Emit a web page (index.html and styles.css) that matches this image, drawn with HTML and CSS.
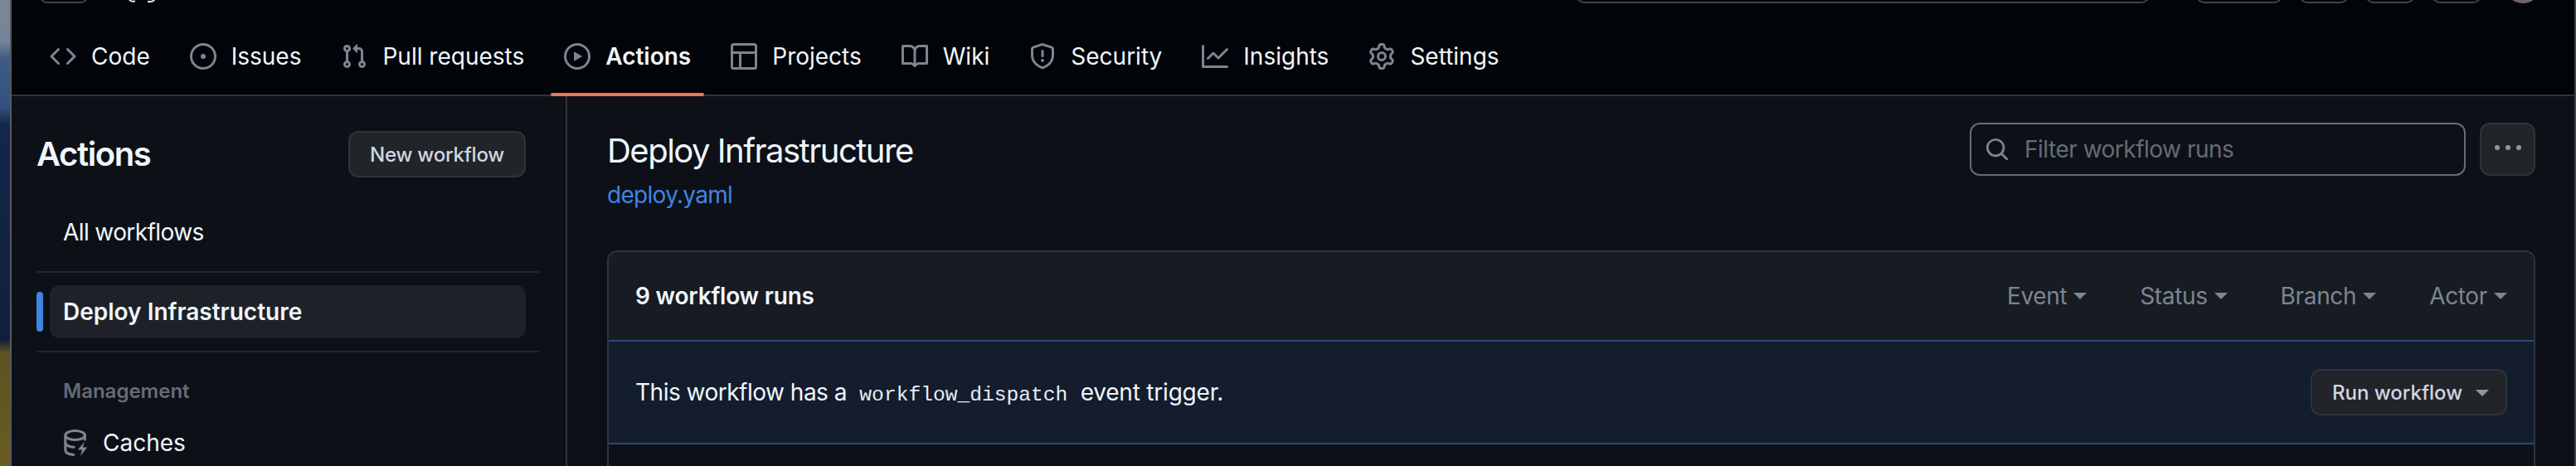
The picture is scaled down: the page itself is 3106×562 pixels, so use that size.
FILE: index.html
```html
<!DOCTYPE html>
<html lang="en">
<head>
<meta charset="utf-8">
<title>Deploy Infrastructure · Actions</title>
<link rel="stylesheet" href="styles.css">
</head>
<body>
<div class="window">
  <header class="header">
    <div class="top-row">
      <span class="clip-btn clip-logo"></span>
      <svg class="clip-glyphs" width="40" height="3" viewBox="0 0 40 3"><path d="M2 0c1 1.400 3 2 7 1.500M24 1.800c4 .5 7-.2 8-1.800" fill="none" stroke="#e6edf3" stroke-width="2"/></svg>
      <span class="top-spacer"></span>
      <span class="clip-btn clip-search"></span>
      <span class="clip-btn clip-wide"></span>
      <span class="clip-btn clip-small"></span>
      <span class="clip-btn clip-small"></span>
      <span class="clip-btn clip-small"></span>
      <span class="clip-avatar"></span>
    </div>
    <nav class="tabs">
      <a class="tab"><svg class="icon" viewBox="0 0 16 16"><path d="m11.28 3.22 4.25 4.25a.75.75 0 0 1 0 1.06l-4.25 4.25a.749.749 0 0 1-1.275-.326.749.749 0 0 1 .215-.734L13.94 8l-3.72-3.72a.749.749 0 0 1 .326-1.275.749.749 0 0 1 .734.215Zm-6.56 0a.751.751 0 0 1 1.042.018.751.751 0 0 1 .018 1.042L2.06 8l3.72 3.72a.749.749 0 0 1-.326 1.275.749.749 0 0 1-.734-.215L.47 8.53a.75.75 0 0 1 0-1.06Z"/></svg>Code</a>
      <a class="tab"><svg class="icon" viewBox="0 0 16 16"><path d="M8 9.500a1.500 1.500 0 1 0 0-3 1.500 1.500 0 0 0 0 3Z"/><path d="M8 0a8 8 0 1 1 0 16A8 8 0 0 1 8 0ZM1.500 8a6.500 6.500 0 1 0 13 0 6.500 6.500 0 0 0-13 0Z"/></svg>Issues</a>
      <a class="tab"><svg class="icon" viewBox="0 0 16 16"><path d="M1.500 3.250a2.250 2.250 0 1 1 3 2.122v5.256a2.251 2.251 0 1 1-1.500 0V5.372A2.250 2.250 0 0 1 1.500 3.250Zm5.677-.177L9.573.677A.25.25 0 0 1 10 .854V2.500h1A2.500 2.500 0 0 1 13.500 5v5.628a2.251 2.251 0 1 1-1.500 0V5a1 1 0 0 0-1-1h-1v1.646a.25.25 0 0 1-.427.177L7.177 3.427a.25.25 0 0 1 0-.354ZM3.750 2.500a.75.75 0 1 0 0 1.500.75.75 0 0 0 0-1.500Zm0 9.500a.75.75 0 1 0 0 1.500.75.75 0 0 0 0-1.500Zm8.250.75a.75.75 0 1 0 1.500 0 .75.75 0 0 0-1.500 0Z"/></svg>Pull requests</a>
      <a class="tab tab-active"><svg class="icon" viewBox="0 0 16 16"><path d="M8 0a8 8 0 1 1 0 16A8 8 0 0 1 8 0ZM1.500 8a6.500 6.500 0 1 0 13 0 6.500 6.500 0 0 0-13 0Zm4.879-2.773 4.264 2.559a.25.25 0 0 1 0 .428l-4.264 2.559A.25.25 0 0 1 6 10.559V5.442a.25.25 0 0 1 .379-.215Z"/></svg>Actions</a>
      <a class="tab"><svg class="icon" viewBox="0 0 16 16"><path d="M0 1.750C0 .784.784 0 1.750 0h12.500C15.216 0 16 .784 16 1.750v12.500A1.750 1.750 0 0 1 14.250 16H1.750A1.750 1.750 0 0 1 0 14.250ZM6.500 6.500v8h7.750a.25.25 0 0 0 .25-.25V6.500Zm8-1.500V1.750a.25.25 0 0 0-.25-.25H1.750a.25.25 0 0 0-.25.25V5Zm-13 1.500v7.750c0 .138.112.25.25.25H5v-8Z"/></svg>Projects</a>
      <a class="tab"><svg class="icon" viewBox="0 0 16 16"><path d="M0 1.750A.75.75 0 0 1 .75 1h4.253c1.227 0 2.317.59 3 1.501A3.743 3.743 0 0 1 11.006 1h4.245a.75.75 0 0 1 .75.75v10.500a.75.75 0 0 1-.75.75h-4.507a2.250 2.250 0 0 0-1.591.659l-.622.621a.75.75 0 0 1-1.060 0l-.622-.621A2.250 2.250 0 0 0 5.258 13H.75a.75.75 0 0 1-.75-.75Zm7.251 10.324.004-5.073-.002-2.253A2.250 2.250 0 0 0 5.003 2.500H1.500v9h3.757a3.750 3.750 0 0 1 1.994.574ZM8.755 4.750l-.004 7.322a3.752 3.752 0 0 1 1.992-.572H14.500v-9h-3.495a2.250 2.250 0 0 0-2.250 2.250Z"/></svg>Wiki</a>
      <a class="tab"><svg class="icon" viewBox="0 0 16 16"><path d="M7.467.133a1.748 1.748 0 0 1 1.066 0l5.250 1.680A1.750 1.750 0 0 1 15 3.480V7c0 1.566-.32 3.182-1.303 4.682-.983 1.498-2.585 2.813-5.032 3.855a1.697 1.697 0 0 1-1.330 0c-2.447-1.042-4.049-2.357-5.032-3.855C1.320 10.182 1 8.566 1 7V3.480a1.750 1.750 0 0 1 1.217-1.667Zm.61 1.429a.25.25 0 0 0-.153 0l-5.250 1.680a.25.25 0 0 0-.174.238V7c0 1.358.275 2.666 1.057 3.860.784 1.194 2.121 2.340 4.366 3.297a.196.196 0 0 0 .154 0c2.245-.956 3.582-2.104 4.366-3.298C13.225 9.666 13.500 8.360 13.500 7V3.480a.251.251 0 0 0-.174-.237l-5.250-1.680ZM8.750 4.750v3a.75.75 0 0 1-1.500 0v-3a.75.75 0 0 1 1.500 0ZM9 10.500a1 1 0 1 1-2 0 1 1 0 0 1 2 0Z"/></svg>Security</a>
      <a class="tab"><svg class="icon" viewBox="0 0 16 16"><path d="M1.500 1.750V13.500h13.750a.75.75 0 0 1 0 1.500H.75a.75.75 0 0 1-.75-.75V1.750a.75.75 0 0 1 1.500 0Zm14.280 2.530-5.250 5.250a.75.75 0 0 1-1.060 0L7 7.060 4.280 9.780a.751.751 0 0 1-1.042-.018.751.751 0 0 1-.018-1.042l3.250-3.250a.75.75 0 0 1 1.060 0L10 7.940l4.720-4.720a.751.751 0 0 1 1.042.018.751.751 0 0 1 .018 1.042Z"/></svg>Insights</a>
      <a class="tab"><svg class="icon" viewBox="0 0 16 16"><path d="M8 0a8.200 8.200 0 0 1 .701.031C9.444.095 9.990.645 10.160 1.290l.288 1.107c.018.066.079.158.212.224.231.114.454.243.668.386.123.082.233.09.299.071l1.103-.303c.644-.176 1.392.021 1.820.63.27.385.506.792.704 1.218.315.675.111 1.422-.364 1.891l-.814.806c-.049.048-.098.147-.088.294.016.257.016.515 0 .772-.01.147.038.246.088.294l.814.806c.475.469.679 1.216.364 1.891a7.977 7.977 0 0 1-.704 1.217c-.428.61-1.176.807-1.820.63l-1.102-.302c-.067-.019-.177-.011-.3.071a5.909 5.909 0 0 1-.668.386c-.133.066-.194.158-.211.224l-.29 1.106c-.168.646-.715 1.196-1.458 1.260a8.006 8.006 0 0 1-1.402 0c-.743-.064-1.289-.614-1.458-1.260l-.289-1.106c-.018-.066-.079-.158-.212-.224a5.738 5.738 0 0 1-.668-.386c-.123-.082-.233-.09-.299-.071l-1.103.303c-.644.176-1.392-.021-1.820-.63a8.120 8.120 0 0 1-.704-1.218c-.315-.675-.111-1.422.363-1.891l.815-.806c.05-.048.098-.147.088-.294a6.214 6.214 0 0 1 0-.772c.01-.147-.038-.246-.088-.294l-.815-.806C.635 6.045.431 5.298.746 4.623a7.920 7.920 0 0 1 .704-1.217c.428-.61 1.176-.807 1.820-.63l1.102.302c.067.019.177.011.3-.071.214-.143.437-.272.668-.386.133-.066.194-.158.211-.224l.29-1.106C6.009.645 6.556.095 7.299.03 7.530.01 7.764 0 8 0Zm-.571 1.525c-.036.003-.108.036-.137.146l-.289 1.105c-.147.561-.549.967-.998 1.189-.173.086-.34.183-.5.29-.417.278-.97.423-1.529.27l-1.103-.303c-.109-.03-.175.016-.195.045-.22.312-.412.644-.573.99-.014.031-.021.11.059.19l.815.806c.411.406.562.957.53 1.456a4.709 4.709 0 0 0 0 .582c.032.499-.119 1.050-.53 1.456l-.815.806c-.081.08-.073.159-.059.19.162.346.353.677.573.989.02.03.085.076.195.046l1.102-.303c.56-.153 1.113-.008 1.530.27.161.107.328.204.501.29.447.222.85.629.997 1.189l.289 1.105c.029.109.101.143.137.146a6.600 6.600 0 0 0 1.142 0c.036-.003.108-.036.137-.146l.289-1.105c.147-.561.549-.967.998-1.189.173-.086.34-.183.5-.29.417-.278.97-.423 1.529-.27l1.103.303c.109.029.175-.016.195-.045.22-.313.411-.644.573-.99.014-.031.021-.11-.059-.19l-.815-.806c-.411-.406-.562-.957-.53-1.456a4.709 4.709 0 0 0 0-.582c-.032-.499.119-1.050.53-1.456l.815-.806c.081-.08.073-.159.059-.19a6.464 6.464 0 0 0-.573-.989c-.02-.03-.085-.076-.195-.046l-1.102.303c-.56.153-1.113.008-1.530-.27a4.440 4.440 0 0 0-.501-.29c-.447-.222-.85-.629-.997-1.189l-.289-1.105c-.029-.11-.101-.143-.137-.146a6.600 6.600 0 0 0-1.142 0ZM11 8a3 3 0 1 1-6 0 3 3 0 0 1 6 0ZM9.500 8a1.500 1.500 0 1 0-3.001.001A1.500 1.500 0 0 0 9.500 8Z"/></svg>Settings</a>
    </nav>
  </header>
  <div class="content">
    <aside class="sidebar">
      <div class="side-head">
        <h2 class="side-title">Actions</h2>
        <button class="btn btn-new">New workflow</button>
      </div>
      <a class="side-link side-all">All workflows</a>
      <hr class="divider">
      <div class="side-active-row">
        <span class="side-marker"></span>
        <a class="side-link side-active">Deploy Infrastructure</a>
      </div>
      <hr class="divider">
      <div class="side-section">Management</div>
      <a class="side-tool"><svg class="tool-icon" viewBox="0 0 16 16"><g fill="none" stroke="#7d8590" stroke-width="1.500" stroke-linecap="round" stroke-linejoin="round"><ellipse cx="7.300" cy="3.500" rx="5.900" ry="2.700"/><path d="M1.400 3.500v9c0 1.400 2 2.500 5 2.700M1.400 8c.4 1.400 2.400 2.500 5.200 2.600M13.200 3.500V6"/></g><path d="M12.800 7.500 8.900 12.200h2.600l-1 3.800 4.100-5.200h-2.600Z" fill="#7d8590"/></svg>Caches</a>
    </aside>
    <main class="main">
      <div class="main-head">
        <div class="title-block">
          <h1 class="page-title">Deploy Infrastructure</h1>
          <a class="file-link">deploy.yaml</a>
        </div>
        <div class="head-actions">
          <div class="filter-box">
            <svg class="icon search-icon" viewBox="0 0 16 16"><path d="M10.680 11.740a6 6 0 0 1-7.922-8.982 6 6 0 0 1 8.982 7.922l3.040 3.040a.749.749 0 0 1-.326 1.275.749.749 0 0 1-.734-.215ZM11.500 7a4.499 4.499 0 1 0-8.997 0A4.499 4.499 0 0 0 11.500 7Z"/></svg>
            <span class="placeholder">Filter workflow runs</span>
          </div>
          <button class="btn btn-more"><svg class="kebab" viewBox="0 0 16 16"><path d="M8 9a1.500 1.500 0 1 0 0-3 1.500 1.500 0 0 0 0 3ZM1.500 9a1.500 1.500 0 1 0 0-3 1.500 1.500 0 0 0 0 3Zm13 0a1.500 1.500 0 1 0 0-3 1.500 1.500 0 0 0 0 3Z"/></svg></button>
        </div>
      </div>
      <section class="card">
        <div class="card-head">
          <strong class="run-count">9 workflow runs</strong>
          <div class="filters">
            <span class="filter">Event<i class="caret"></i></span>
            <span class="filter">Status<i class="caret"></i></span>
            <span class="filter">Branch<i class="caret"></i></span>
            <span class="filter">Actor<i class="caret"></i></span>
          </div>
        </div>
        <div class="banner">
          <span class="banner-text">This workflow has a <code class="code">workflow_dispatch</code> <span class="banner-tail">event trigger.</span></span>
          <button class="btn btn-run">Run workflow<i class="caret caret-run"></i></button>
        </div>
        <div class="card-rest"></div>
      </section>
    </main>
  </div>
</div>
</body>
</html>
```
FILE: styles.css
```css
* { box-sizing: border-box; }
html, body { margin: 0; height: 100%; }
body {
  height: 562px;
  overflow: hidden;
  padding-left: 12px;
  font-family: Inter, "Liberation Sans", sans-serif;
  font-size: 28px;
  color: #f0f6fc;
  background:
    linear-gradient(180deg, #7d8794 0, #76849a 50px, #3f5c88 70px, #34507f 130px, #14274a 150px, #10203c 410px, #5d5220 425px, #6a5c20 562px);
}
a { color: inherit; text-decoration: none; }
button { font-family: inherit; }
h1, h2 { margin: 0; font-weight: 400; }

.window {
  height: 562px;
  border-left: 2px solid #565a60;
  border-right: 2px solid #3d444d;
  background: #0d1117;
  overflow: hidden;
}

.header {
  background: #010409;
  border-bottom: 2px solid #2f353d;
  height: 116px;
}
.top-row {
  height: 4px;
  display: flex;
  align-items: flex-end;
  padding-left: 33px;
  overflow: hidden;
}
.clip-btn {
  flex: none;
  height: 40px;
  border: 2px solid #3d444d;
  border-radius: 10px;
}
.clip-logo { width: 60px; }
.clip-glyphs { flex: none; margin-left: 47px; align-self: flex-start; }
.top-spacer { flex: 1; }
.clip-search { width: 692px; margin-right: 56px; }
.clip-wide { width: 104px; margin-right: 20px; }
.clip-small { width: 60px; margin-right: 20px; }
.clip-avatar {
  flex: none;
  width: 44px;
  height: 44px;
  margin: 0 40px 0 8px;
  border-radius: 50%;
  background: #6f6468;
}

.tabs {
  height: 110px;
  display: flex;
  gap: 16px;
  padding: 0 0 0 30px;
  align-items: stretch;
}
.tab {
  position: relative;
  display: flex;
  align-items: center;
  gap: 18px;
  padding: 18px 16px 0;
  line-height: 42px;
  white-space: nowrap;
}
.tab-active { font-weight: 600; }
.tab-active::after {
  content: "";
  position: absolute;
  left: 0;
  right: 0;
  bottom: -2px;
  height: 4px;
  border-radius: 2px;
  background: #ec775c;
}
.icon {
  flex: none;
  width: 32px;
  height: 32px;
  fill: #7d8590;
}

.content { display: flex; height: 446px; }

.sidebar {
  flex: none;
  width: 670px;
  border-right: 2px solid #2f353d;
  padding: 42px 32px 0 30px;
}
.side-head {
  display: flex;
  justify-content: space-between;
  align-items: center;
  padding-right: 16px;
  height: 56px;
}
.side-title { font-size: 40px; font-weight: 600; line-height: 56px; letter-spacing: -1.400px; }
.btn {
  background: #212429;
  border: 2px solid #2f343b;
  border-radius: 12px;
  color: #d1d7e0;
}
.btn-new {
  width: 214px;
  height: 56px;
  padding: 0;
  font-size: 24px;
  font-weight: 500;
  letter-spacing: -0.2px;
}
.side-link {
  display: flex;
  align-items: center;
  height: 64px;
  padding-left: 32px;
  margin-top: 34px;
}
.side-all { letter-spacing: -0.6px; }
.divider {
  height: 2px;
  border: 0;
  background: #21262d;
  margin: 15px 0;
}
.side-active-row {
  display: flex;
  align-items: center;
  gap: 8px;
  padding-right: 16px;
}
.side-marker {
  flex: none;
  width: 8px;
  height: 48px;
  border-radius: 4px;
  background: #4184e4;
}
.side-active {
  flex: 1;
  margin-top: 0;
  padding-left: 16px;
  border-radius: 12px;
  background: #1e2228;
  font-weight: 600;
}
.side-section {
  margin-top: 31px;
  padding-left: 32px;
  font-size: 24px;
  font-weight: 600;
  line-height: 32px;
  color: #656c76;
}
.side-tool {
  display: flex;
  align-items: center;
  gap: 16px;
  margin-top: 26px;
  padding-left: 32px;
  line-height: 40px;
}
.tool-icon { flex: none; width: 32px; height: 32px; }

.main {
  flex: 1;
  min-width: 0;
  padding: 32px 47px 0 48px;
}
.main-head { display: flex; justify-content: space-between; align-items: flex-start; }
.title-block { padding: 10px 0 46px; }
.page-title { font-size: 40px; line-height: 48px; letter-spacing: -1.500px; }
.file-link {
  display: block;
  margin-top: 8px;
  line-height: 42px;
  letter-spacing: -0.7px;
  color: #4184e4;
}
.head-actions { display: flex; gap: 17px; }
.filter-box {
  width: 598px;
  height: 64px;
  display: flex;
  align-items: center;
  gap: 18px;
  padding-left: 16px;
  border: 2px solid #656c76;
  border-radius: 12px;
  background: #0d1117;
}
.search-icon { width: 30px; height: 30px; }
.placeholder { color: #656c76; letter-spacing: -0.5px; }
.btn-more {
  width: 67px;
  height: 64px;
  padding: 0;
  display: flex;
  align-items: center;
  justify-content: center;
}
.kebab { width: 32px; height: 32px; fill: #9198a1; transform: translateY(-1px); }

.card {
  border: 2px solid #2f343b;
  border-bottom: 0;
  border-radius: 12px 12px 0 0;
  overflow: hidden;
}
.card-head {
  display: flex;
  justify-content: space-between;
  align-items: center;
  height: 108px;
  padding: 0 32px;
  background: #171b22;
  border-bottom: 2px solid #2a4a7e;
}
.run-count { font-weight: 600; color: #f0f6fc; letter-spacing: -0.2px; }
.filters { display: flex; gap: 64px; }
.filter {
  display: flex;
  align-items: center;
  gap: 8px;
  letter-spacing: -0.35px;
  color: #7d8590;
}
.caret {
  display: block;
  width: 0;
  height: 0;
  border-left: 8px solid transparent;
  border-right: 8px solid transparent;
  border-top: 8px solid currentColor;
}
.banner {
  display: flex;
  justify-content: space-between;
  align-items: center;
  height: 124px;
  padding: 0 32px;
  background: #131d2e;
  border-bottom: 2px solid #2a4a7e;
}
.banner-text { color: #f0f6fc; letter-spacing: -0.5px; }
.banner-tail { letter-spacing: -0.2px; }
.code {
  font-family: "Liberation Mono", "DejaVu Sans Mono", monospace;
  font-size: 24.600px;
  letter-spacing: 0;
  padding: 0 8px;
  color: #e6edf3;
}
.btn-run {
  width: 237px;
  height: 56px;
  display: flex;
  align-items: center;
  padding: 0 0 0 24px;
  gap: 16px;
  font-size: 24px;
  font-weight: 500;
}
.caret-run {
  color: #9198a1;
  margin-top: 2px;
}
.card-rest { height: 120px; background: #0d1117; }
```
